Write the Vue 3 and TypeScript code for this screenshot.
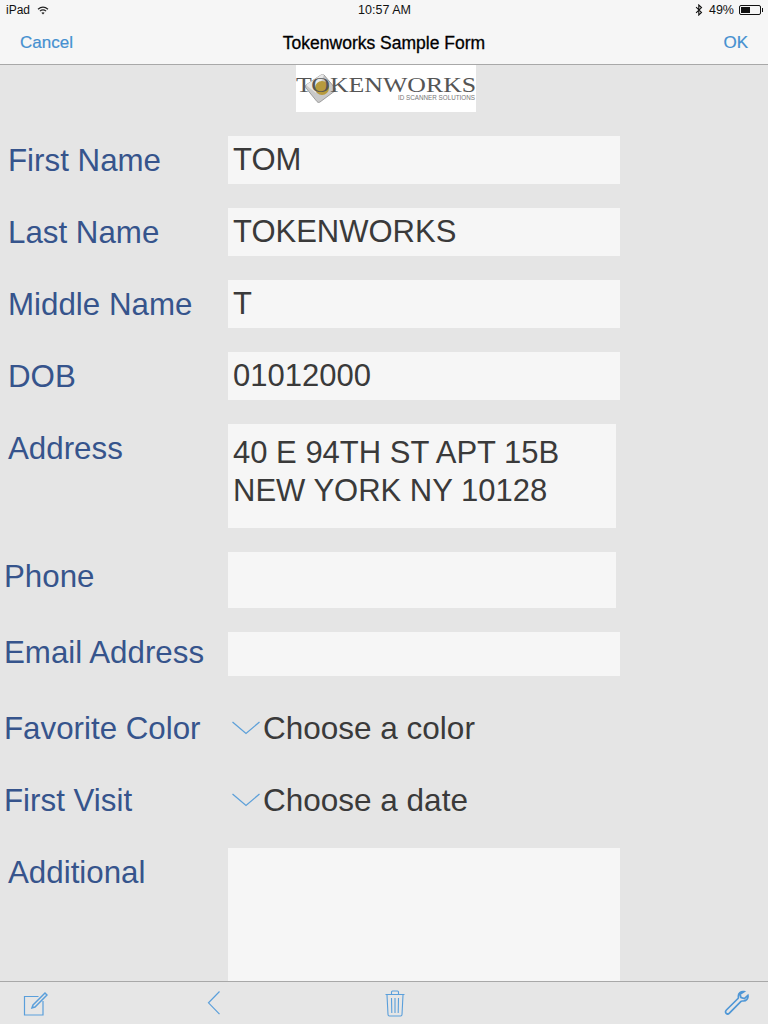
<script setup lang="ts">
type Row = {
  label: string
  value?: string
  kind: 'input' | 'picker'
  cls: string
}

const rows: Row[] = [
  { label: 'First Name', value: 'TOM', kind: 'input', cls: 'single' },
  { label: 'Last Name', value: 'TOKENWORKS', kind: 'input', cls: 'single' },
  { label: 'Middle Name', value: 'T', kind: 'input', cls: 'single' },
  { label: 'DOB', value: '01012000', kind: 'input', cls: 'single' },
  { label: 'Address', value: '40 E 94TH ST APT 15B\nNEW YORK NY 10128', kind: 'input', cls: 'address' },
  { label: 'Phone', kind: 'input', cls: 'phone' },
  { label: 'Email Address', kind: 'input', cls: 'email' },
  { label: 'Favorite Color', value: 'Choose a color', kind: 'picker', cls: 'picker' },
  { label: 'First Visit', value: 'Choose a date', kind: 'picker', cls: 'picker' },
  { label: 'Additional', kind: 'input', cls: 'additional' },
]
</script>

<template>
  <div class="screen">
    <div class="status">
      <div class="status-left">
        <span>iPad</span>
        <svg class="wifi" width="12" height="9" viewBox="0 0 12 9">
          <path d="M1 3.2C4 .6 8 .6 11 3.2" fill="none" stroke="#222" stroke-width="1.2" />
          <path d="M2.9 5.1C4.8 3.6 7.2 3.6 9.1 5.1" fill="none" stroke="#222" stroke-width="1.2" />
          <path d="M4.4 6.7 6 8.6l1.6-1.9C6.6 6 5.4 6 4.4 6.7z" fill="#222" />
        </svg>
      </div>
      <span class="clock">10:57 AM</span>
      <div class="status-right">
        <svg width="8" height="12" viewBox="0 0 7 12">
          <path d="M.6 3.2 6 8.4 3.3 11V1L6 3.6.6 8.8" fill="none" stroke="#111" stroke-width="1.1" />
        </svg>
        <span class="pct">49%</span>
        <div class="battery"><div class="charge"></div></div>
        <div class="nub"></div>
      </div>
    </div>

    <header class="nav">
      <a class="nav-btn">Cancel</a>
      <span class="nav-title">Tokenworks Sample Form</span>
      <a class="nav-btn ok">OK</a>
    </header>

    <main class="content">
      <div class="logo">
        <div class="logo-inner">
          <svg class="chip" width="36" height="32" viewBox="0 0 36 32">
            <path d="M1 12 16 2c1-.6 2-.6 3 0l11 13c1 1 .8 2-.2 3L15 29c-1 .7-2 .6-3-.4L1 15c-.8-1-.8-2 0-3z" fill="#c9c9c9" stroke="#8a8a8a" stroke-width=".8" />
            <path d="M1 12 16 2c1-.6 2-.6 3 0L11 20z" fill="#e9e9e9" />
            <circle cx="17" cy="15" r="7" fill="#b79a3d" />
          </svg>
          <span class="logo-word">TOKENWORKS</span>
          <span class="logo-sub">ID SCANNER SOLUTIONS</span>
        </div>
      </div>

      <div class="form">
        <div v-for="row in rows" :key="row.label" class="row" :class="row.cls">
          <label class="label">{{ row.label }}</label>
          <div v-if="row.kind === 'input'" class="field">{{ row.value }}</div>
          <div v-else class="pick">
            <svg width="28" height="14" viewBox="0 0 28 14">
              <path d="M.5 1 14 12.500 27.500 1" fill="none" stroke="#5da0d9" stroke-width="1.3" />
            </svg>
            <span>{{ row.value }}</span>
          </div>
        </div>
      </div>
    </main>

    <footer class="toolbar">
      <svg width="26" height="26" viewBox="0 0 26 26" fill="none" stroke="#5a9fdb" stroke-width="1.2">
        <path d="M21 11V25H2.500V6.500H16.500" />
        <path d="M11 15 23 3l2 2L13 17l-3 .8z" stroke-width="1.5" />
      </svg>
      <svg width="14" height="26" viewBox="0 0 14 26" fill="none" stroke="#5a9fdb" stroke-width="1.2">
        <path d="M12.500 1.500 1.500 12.800l11 11.400" />
      </svg>
      <svg width="20" height="27" viewBox="0 0 20 27" fill="none" stroke="#5a9fdb" stroke-width="1.1">
        <path d="M.5 4.500h19M6.500 4.500V2c0-.6.4-1 1-1h5c.6 0 1 .4 1 1v2.500" />
        <path d="M2 5l1 19.500c0 .8.6 1.500 1.500 1.500h11c.9 0 1.500-.7 1.500-1.500L18 5" />
        <path d="M6.500 8l.3 15M10 8v15M13.500 8l-.3 15" />
      </svg>
      <svg width="26" height="26" viewBox="0 0 26 26" fill="none" stroke="#4f97d6" stroke-width="1.7">
        <path d="M20 1.600c-3-.6-6 1.800-5.600 5 .1.800.2 1.300-.4 1.900L2.400 20c-1.300 1.300-1 2.600-.2 3.300.8.800 2 1 3.200-.2L17 11.400c.6-.6 1.200-.4 1.900-.4 3.300.3 5.700-2.700 5-5.700l-3.500 3.300-3.400-1-1-3.300z" />
      </svg>
    </footer>
  </div>
</template>

<style scoped>
.screen {
  width: 768px;
  height: 1024px;
  display: flex;
  flex-direction: column;
  overflow: hidden;
  background: #e5e5e5;
  font-family: "Liberation Sans", Arial, sans-serif;
  color: #3a3a3a;
}

.status {
  height: 20px;
  flex: none;
  display: grid;
  grid-template-columns: 1fr auto 1fr;
  align-items: center;
  padding: 0 5px 0 6px;
  background: #f6f6f6;
  font-size: 12px;
  color: #111;
}
.status-left {
  display: flex;
  align-items: center;
  gap: 7px;
}
.status-right {
  display: flex;
  align-items: center;
  justify-content: flex-end;
}
.clock {
  text-align: center;
  font-size: 12.5px;
}
.pct {
  margin-left: 6px;
  margin-right: 5px;
  font-size: 12.5px;
}
.battery {
  width: 22px;
  height: 10px;
  border: 1px solid #111;
  border-radius: 2px;
  padding: 1px;
  box-sizing: border-box;
}
.charge {
  width: 49%;
  height: 100%;
  background: #111;
}
.nub {
  width: 1px;
  height: 4px;
  background: #111;
  margin-left: 1px;
}

.nav {
  height: 45px;
  flex: none;
  box-sizing: border-box;
  display: grid;
  grid-template-columns: 1fr auto 1fr;
  align-items: center;
  padding: 2px 20px 0;
  background: #f6f6f6;
  border-bottom: 1px solid #a8a8a8;
}
.nav-btn {
  font-size: 17px;
  color: #4590d0;
  -webkit-text-stroke: 0.2px #4590d0;
}
.nav-btn.ok {
  text-align: right;
}
.nav-title {
  font-size: 17.5px;
  color: #000;
  -webkit-text-stroke: 0.3px #000;
}

.content {
  flex: 1;
  min-height: 0;
  overflow: hidden;
}

.logo {
  display: flex;
  justify-content: center;
  height: 47px;
  padding-left: 4px;
}
.logo-inner {
  width: 180px;
  height: 47px;
  background: #fff;
  position: relative;
  font-family: "Liberation Serif", serif;
  color: #555;
  overflow: hidden;
}
.logo-word {
  position: absolute;
  left: 0;
  top: 11px;
  font-size: 21.5px;
  line-height: 18px;
  white-space: nowrap;
  transform: scaleX(1.2);
  transform-origin: left center;
}
.chip {
  position: absolute;
  left: 9px;
  top: 8px;
}
.logo-sub {
  position: absolute;
  right: 1px;
  top: 29px;
  font-family: "Liberation Sans", sans-serif;
  font-size: 6.3px;
  line-height: 7px;
  color: #777;
  white-space: nowrap;
}

.form {
  padding-top: 24px;
  display: flex;
  flex-direction: column;
  gap: 24px;
}

.row {
  display: grid;
  grid-template-columns: 228px 392px;
  font-size: 31px;
}
.label {
  color: #36548c;
  padding: 2px 0 0 8px;
  font-size: 31.3px;
  line-height: 46px;
  white-space: nowrap;
}
.field {
  background: #f6f6f6;
  padding: 5px 5px 0;
  line-height: 37px;
  white-space: pre-line;
  height: 48px;
  box-sizing: border-box;
}

.address .field {
  width: 388px;
  height: 104px;
  padding-top: 10px;
  line-height: 37.5px;
}
.phone .label,
.picker .label {
  padding-left: 4px;
}
.phone .field {
  width: 388px;
  height: 56px;
}
.email .field {
  height: 44px;
}
.email .label {
  padding: 0 0 0 4px;
  line-height: 41px;
}
.picker {
  margin-top: 4px;
}
.picker + .picker {
  margin-top: 0;
}
.additional .field {
  height: 140px;
}

.pick {
  display: flex;
  align-items: center;
  gap: 3px;
  padding-left: 4px;
  height: 48px;
  font-size: 31.5px;
}

.toolbar {
  height: 43px;
  flex: none;
  box-sizing: border-box;
  border-top: 1px solid #a8a8a8;
  background: #e6e6e6;
  display: grid;
  grid-template-columns: 185px 178px 339px auto;
  align-items: center;
  padding-left: 22px;
}
</style>
